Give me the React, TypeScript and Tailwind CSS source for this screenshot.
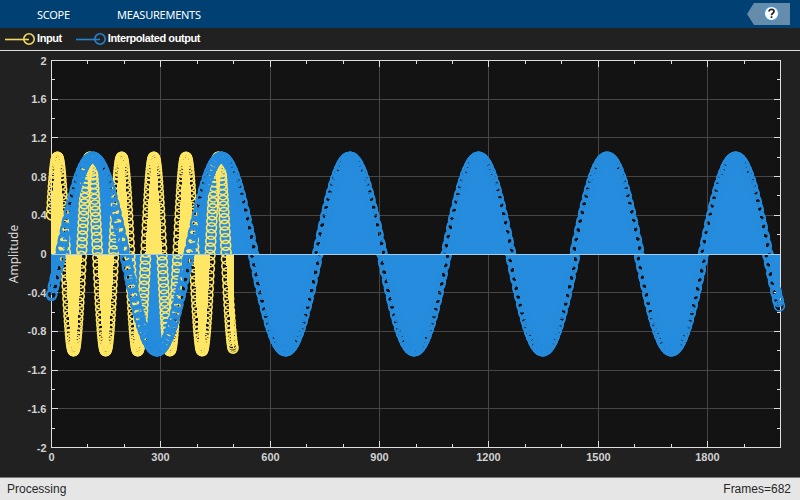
const YELLOW = '#ffe766';
const BLUE = '#268cdd';

const X0 = 51.5;
const Y0 = 254;
const PX_PER_SAMPLE = 0.3645;
const PX_PER_UNIT = 96.75;

interface Signal {
    color: string;
    count: number;
    period: number;
    peak: number;
    bucket: number;
    stroke: number;
}

const input: Signal = { color: YELLOW, count: 499, period: 88.2, peak: 16.2, bucket: 1, stroke: 1.6 };
const output: Signal = { color: BLUE, count: 1998, period: 352.8, peak: 113, bucket: 5.49, stroke: 1.6 };

const sx = (n: number) => X0 + n * PX_PER_SAMPLE;
const sy = (v: number) => Y0 - v * PX_PER_UNIT;

const pointAt = (s: Signal, n: number) => ({
    x: sx(n),
    y: sy(Math.cos((2 * Math.PI * (n - s.peak)) / s.period)),
});

// Keep only a few samples of every bucket
const visibleSamples = (s: Signal) => {
    if (s.bucket === 1) return Array.from({ length: s.count }, (_, n) => n);
    const kept = new Set<number>([0, s.count - 1]);
    for (let b = 0; b < s.count; b += s.bucket) {
        const first = Math.ceil(b);
        const last = Math.ceil(b + s.bucket) - 1;
        [first, first + 1, last].forEach((n) => {
            if (n < s.count) kept.add(n);
        });
    }
    return [...kept];
};

const stemPath = (s: Signal) => {
    let d = '';
    for (let n = 0; n < s.count; n++) {
        const { x, y } = pointAt(s, n);
        d += `M${Math.floor(x) + 0.5} ${Y0}V${y.toFixed(2)}`;
    }
    return d;
};

const Stems = ({ signal }: { signal: Signal }) => (
    <path d={stemPath(signal)} stroke={signal.color} strokeWidth="1" fill="none" shapeRendering="crispEdges" />
);

const Markers = ({ signal }: { signal: Signal }) => (
    <g stroke={signal.color} strokeWidth={signal.stroke} fill="none">
        {visibleSamples(signal).map((n) => {
            const { x, y } = pointAt(signal, n);
            return <circle key={n} cx={x.toFixed(2)} cy={y.toFixed(2)} r="5" />;
        })}
    </g>
);

const yLabels = [2, 1.6, 1.2, 0.8, 0.4, 0, -0.4, -0.8, -1.2, -1.6, -2];
const xLabels = [0, 300, 600, 900, 1200, 1500, 1800];

const snap = (v: number) => Math.floor(v) + 0.5;

const Axes = () => {
    const minorX = Array.from({ length: 19 }, (_, i) => (i + 1) * 100);
    const minorY = Array.from({ length: 19 }, (_, i) => (i - 9) / 5);
    return (
        <g>
            <rect x="51.5" y="60.5" width="729" height="387" fill="#131313" />
            <g stroke="#464646">
                {xLabels.slice(1).map((n) => (
                    <path key={n} d={`M${snap(sx(n))} 61V447`} />
                ))}
                {yLabels.slice(1, -1).map((v) => (
                    <path key={v} d={`M52 ${snap(sy(v))}H780`} />
                ))}
            </g>
            <g stroke="#dedede" fill="none">
                <rect x="51.5" y="60.5" width="729" height="387" />
                {minorX.map((n) => {
                    const len = n % 300 === 0 ? 6 : 3;
                    return <path key={n} d={`M${snap(sx(n))} 61v${len}M${snap(sx(n))} 447v-${len}`} />;
                })}
                {minorY.map((v, i) => {
                    const len = i % 2 === 1 ? 6 : 3;
                    return <path key={v} d={`M52 ${snap(sy(v))}h${len}M780 ${snap(sy(v))}h-${len}`} />;
                })}
            </g>
            <g fill="#d2d2d2" fontSize="11" fontWeight="700" className="font-['Liberation_Sans',sans-serif]">
                {yLabels.map((v) => (
                    <text key={v} x="46.5" y={Math.round(sy(v)) + 4} textAnchor="end">{v}</text>
                ))}
                {xLabels.map((n) => (
                    <text key={n} x={snap(sx(n))} y="461" textAnchor="middle">{n}</text>
                ))}
            </g>
            <text
                transform="translate(18 254) rotate(-90)"
                textAnchor="middle"
                fontSize="12"
                fill="#d8d8d8"
                className="font-['Noto_Sans',sans-serif]"
            >
                Amplitude
            </text>
        </g>
    );
};

const Plot = () => (
    <svg width="800" height="426" viewBox="0 51 800 426" className="block">
        <Axes />
        <Stems signal={input} />
        <Stems signal={output} />
        <Markers signal={input} />
        <Markers signal={output} />
        <path d="M52 254.5H780" stroke="#a3cdf0" />
    </svg>
);

const LegendItem = ({ color, label }: { color: string; label: string }) => (
    <div className="flex items-center">
        <svg width="32" height="14" fill="none" stroke={color} strokeWidth="1.6">
            <path d="M0 7.5H24" />
            <circle cx="24" cy="7" r="5.2" />
        </svg>
        <span className="text-[11px] leading-none font-bold tracking-[-0.42px] whitespace-nowrap text-white">{label}</span>
    </div>
);

const App = () => {
    return (
        <div className="flex h-[500px] w-[800px] flex-col overflow-hidden bg-[#212121] font-['Liberation_Sans',sans-serif]">
            <header className="flex h-7 items-center bg-[#004073] pt-0.5 pr-2.5 pl-[37px] font-['Noto_Sans',sans-serif] text-[11px] tracking-[-0.25px] text-white">
                <span className="w-20">SCOPE</span>
                <span>MEASUREMENTS</span>
                <svg className="-mt-0.5 ml-auto" width="43" height="22">
                    <path d="M0 11L7 0H43V22H7Z" fill="#668cab" />
                    <circle cx="24.5" cy="10.5" r="7" fill="#fff" stroke="#2f92e6" />
                    <path d="M22 8.5C22 5.7 27 5.7 27 8.5C27 10.3 24.5 10.2 24.5 12.3M24.5 13.3V15" fill="none" stroke="#222" strokeWidth="1.7" />
                </svg>
            </header>
            <div className="flex h-[23px] items-center gap-3.5 border-b border-[#dedede] pb-px pl-[5px]">
                <LegendItem color="#f0d95c" label="Input" />
                <LegendItem color="#2484d0" label="Interpolated output" />
            </div>
            <Plot />
            <footer className="flex h-[23px] items-center justify-between border-t border-[#7d7979] bg-[#e6e6e6] pr-[9px] pl-[7px] text-[12px] text-[#262626]">
                <span>Processing</span>
                <span>Frames=682</span>
            </footer>
        </div>
    );
};

export default App;
